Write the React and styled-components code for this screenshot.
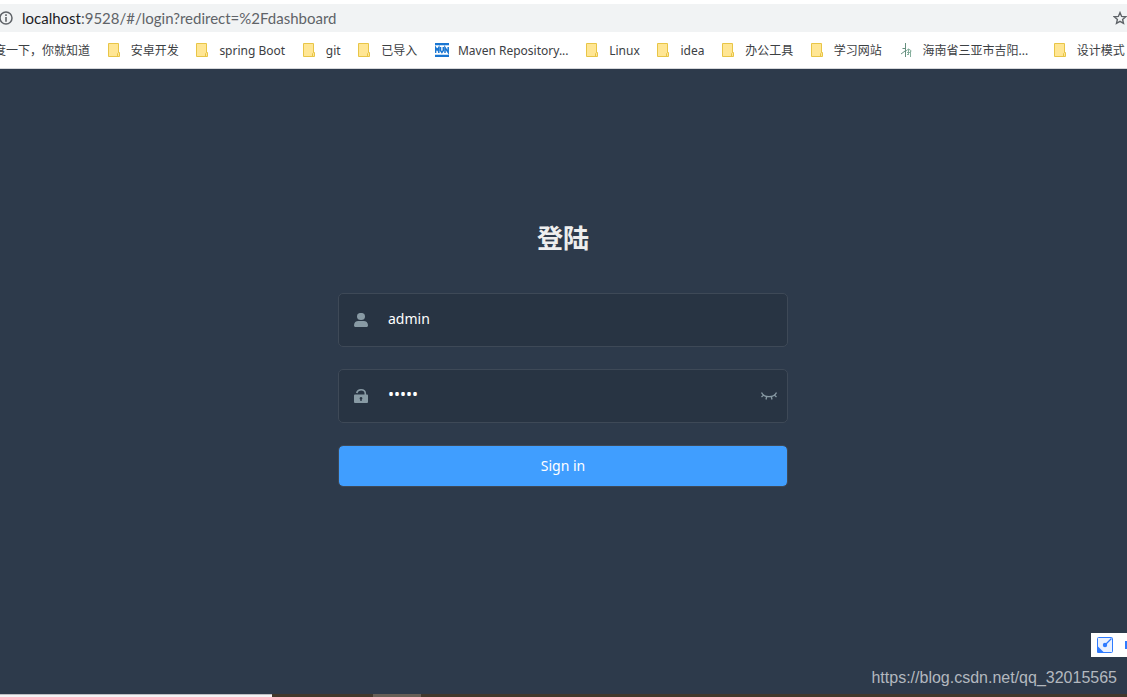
import { useState } from "react";
import styled, { createGlobalStyle } from "styled-components";

const GlobalStyle = createGlobalStyle`
  *, *::before, *::after {
    box-sizing: border-box;
  }

  body {
    margin: 0;
    font-family: "Noto Sans", "Noto Sans CJK SC", sans-serif;
  }
`;

const bookmarks = [
  { label: "百度一下，你就知道" },
  { label: "安卓开发", icon: "folder" },
  { label: "spring Boot", icon: "folder" },
  { label: "git", icon: "folder" },
  { label: "已导入", icon: "folder" },
  { label: "Maven Repository...", icon: "maven" },
  { label: "Linux", icon: "folder" },
  { label: "idea", icon: "folder" },
  { label: "办公工具", icon: "folder" },
  { label: "学习网站", icon: "folder" },
  { label: "海南省三亚市吉阳...", icon: "plant", wide: true },
  { label: "设计模式", icon: "folder" },
];

function FolderIcon() {
  return (
    <svg width="14" height="14" viewBox="0 0 14 14" aria-hidden="true">
      <path d="M.5.5h10v9h1v4H.5z" fill="#ffe694" stroke="#e8c547" />
      <path d="M9.5 13.5v-3l1-1" fill="none" stroke="#e8c547" />
    </svg>
  );
}

function MavenIcon() {
  return (
    <svg width="14" height="14" viewBox="0 0 14 14" aria-hidden="true">
      <path d="M0 0h14v2H0zM0 12h14v2H0z" fill="#1976d2" />
      <path d="M0 2h14v1H0zM0 11h14v1H0z" fill="#c3dcf4" />
      <path
        d="M.6 10V4.500L2.200 7l1.600-2.500V10M5.500 4v3.500L6.900 9.500l1.400-2V4M10 10V4.500l3.200 5V4"
        fill="none"
        stroke="#1976d2"
        strokeWidth="1.500"
      />
    </svg>
  );
}

function PlantIcon() {
  return (
    <svg width="14" height="14" viewBox="0 0 14 14" aria-hidden="true">
      <path d="M5.500 0v14M2.500 5.500h3M5 8l-4 3" fill="none" stroke="#668f7f" />
      <path
        d="M6 8l2.500-2 3 2M8.500 6v6M7 9.500h4M10.500 8v6M7 12l2-2"
        fill="none"
        stroke="#86af9d"
      />
    </svg>
  );
}

const icons = { folder: FolderIcon, maven: MavenIcon, plant: PlantIcon };

function InfoIcon() {
  return (
    <svg width="14" height="14" viewBox="1 0 14 14" aria-hidden="true">
      <circle cx="7" cy="7" r="6" fill="none" stroke="#5f6368" strokeWidth="1.500" />
      <path d="M6.200 3.300h1.600v1.600H6.200zM6.200 6h1.600v4.800H6.200z" fill="#5f6368" />
    </svg>
  );
}

function StarIcon() {
  return (
    <svg width="14" height="14" viewBox="0 0 14 14" aria-hidden="true">
      <path
        d="M7 1.600l1.600 3.800 4.100.3-3.100 2.700.9 4L7 10.300l-3.500 2.100.9-4L1.300 5.700l4.100-.3z"
        fill="none"
        stroke="#5f6368"
        strokeWidth="1.400"
      />
    </svg>
  );
}

function UserIcon() {
  return (
    <svg width="14" height="14" viewBox="0 0 14 14" aria-hidden="true">
      <ellipse cx="7" cy="3.500" rx="4" ry="3.600" fill="currentColor" />
      <path d="M0 12.200C0 9.700 2 8.100 4.200 8.100h5.600c2.200 0 4.200 1.600 4.200 4.100 0 1-.6 1.800-1.600 1.800H1.600C.6 14 0 13.200 0 12.200z" fill="currentColor" />
    </svg>
  );
}

function LockIcon() {
  return (
    <svg width="14" height="14" viewBox="0 0 14 14" aria-hidden="true">
      <path d="M2.700 4C3.200 1.900 4.800.8 7 .8c2.700 0 4.300 1.500 4.300 3.700v1.500" fill="none" stroke="currentColor" strokeWidth="1.600" />
      <path
        d="M1.200 5.500h11.600c.8 0 1.200.5 1.200 1.200v6.100c0 .8-.5 1.200-1.200 1.200H1.200C.5 14 0 13.600 0 12.800V6.700c0-.7.5-1.200 1.200-1.200zM7 8a1.400 1.400 0 0 0-.7 2.600V12h1.400v-1.400A1.400 1.400 0 0 0 7 8z"
        fill="currentColor"
        fillRule="evenodd"
      />
    </svg>
  );
}

function EyeIcon() {
  return (
    <svg width="16" height="8" viewBox="0 0 16 8" aria-hidden="true">
      <path
        d="M.5.5C2 3.200 5 4.700 8 4.700S14 3.200 15.500.5M2.700 3L.5 5M5.700 4.500L5 7.500M10.300 4.500l.7 3M13.300 3l2.200 2"
        fill="none"
        stroke="currentColor"
        strokeWidth="1.300"
      />
    </svg>
  );
}

function CaptureIcon() {
  return (
    <svg width="16" height="16" viewBox="0 0 16 16" aria-hidden="true">
      <rect x=".5" y=".5" width="15" height="15" rx="1" fill="#eaf1ff" stroke="#2f7bff" />
      <path d="M0 8.500L7.500 16H1.500Q0 16 0 14.500z" fill="#2f7bff" />
      <path d="M8 8l6.500-6.500" stroke="#2f7bff" strokeWidth="1.200" />
      <circle cx="8" cy="8" r="2.200" fill="#2f7bff" />
    </svg>
  );
}

function App() {
  const [username, setUsername] = useState("admin");
  const [password, setPassword] = useState("admin");
  const [visible, setVisible] = useState(false);

  return (
    <Window>
      <GlobalStyle />
      <AddressBar>
        <InfoIcon />
        <Address>
          <Host>localhost</Host>:9528/#/login?redirect=%2Fdashboard
        </Address>
        <IconButton type="button" aria-label="Bookmark this page">
          <StarIcon />
        </IconButton>
      </AddressBar>
      <BookmarkBar>
        {bookmarks.map(({ label, icon, wide }) => {
          const Icon = icons[icon];
          return (
            <Bookmark key={label} href="#" $first={!icon} $wide={wide}>
              {Icon && <Icon />}
              <BookmarkLabel>{label}</BookmarkLabel>
            </Bookmark>
          );
        })}
      </BookmarkBar>
      <LoginPage>
        <LoginForm onSubmit={(e) => e.preventDefault()}>
          <Title>登陆</Title>
          <Field>
            <FieldIcon htmlFor="username" aria-label="Username">
              <UserIcon />
            </FieldIcon>
            <Input
              id="username"
              value={username}
              onChange={(e) => setUsername(e.target.value)}
            />
          </Field>
          <Field>
            <FieldIcon htmlFor="password" aria-label="Password">
              <LockIcon />
            </FieldIcon>
            <Input
              id="password"
              type={visible ? "text" : "password"}
              value={password}
              onChange={(e) => setPassword(e.target.value)}
            />
            <IconButton
              type="button"
              aria-label="Show password"
              onClick={() => setVisible(!visible)}
            >
              <EyeIcon />
            </IconButton>
          </Field>
          <SubmitButton type="submit">Sign in</SubmitButton>
        </LoginForm>
        <CaptureTool>
          <CaptureIcon />
          <CaptureMark />
        </CaptureTool>
        <Watermark>https://blog.csdn.net/qq_32015565</Watermark>
      </LoginPage>
      <Taskbar>
        <TaskPreview />
        <TaskItem />
      </Taskbar>
    </Window>
  );
}

export default App;

const Window = styled.div`
  display: flex;
  flex-direction: column;
  min-height: 100vh;
  overflow: hidden;
  background: #fff;
`;

const AddressBar = styled.div`
  display: flex;
  align-items: center;
  gap: 8px;
  height: 28px;
  margin-top: 4px;
  background: #f1f3f4;
  overflow: hidden;

  svg {
    flex: none;
  }
`;

const Address = styled.span`
  flex: 1;
  font-family: Lato, sans-serif;
  font-size: 15px;
  line-height: 20px;
  color: #5f6368;
`;

const Host = styled.span`
  color: #202124;
`;

const IconButton = styled.button`
  display: flex;
  flex: none;
  padding: 0;
  border: 0;
  background: none;
  color: #889aa4;
  cursor: pointer;
`;

const BookmarkBar = styled.nav`
  display: flex;
  align-items: center;
  justify-content: space-between;
  gap: 17px;
  height: 37px;
  padding-right: 2px;
  border-bottom: 1px solid #d5d7da;
  overflow: hidden;
`;

const Bookmark = styled.a`
  display: flex;
  flex: none;
  align-items: center;
  gap: 9px;
  margin-left: ${(props) => (props.$first ? "-18px" : "0")};
  margin-right: ${(props) => (props.$wide ? "8px" : "0")};
  font-size: 12px;
  line-height: 18px;
  color: #3c4043;
  text-decoration: none;
  white-space: nowrap;
`;

const BookmarkLabel = styled.span`
  padding-top: 2px;
`;

const LoginPage = styled.main`
  position: relative;
  flex: 1;
  padding-right: 1px;
  background: #2d3a4b;
`;

const LoginForm = styled.form`
  display: flex;
  flex-direction: column;
  gap: 22px;
  max-width: 450px;
  margin: 0 auto;
  padding-top: 150px;
`;

const Title = styled.h1`
  margin: 0 0 14px;
  font-size: 26px;
  line-height: 38px;
  font-weight: 700;
  color: #eee;
  text-align: center;
`;

const Field = styled.div`
  display: flex;
  align-items: center;
  height: 54px;
  padding: 0 10px 0 15px;
  border: 1px solid #3e4957;
  border-radius: 5px;
  background: #283443;
`;

const FieldIcon = styled.label`
  display: flex;
  flex: none;
  width: 19px;
  color: #889aa4;
`;

const Input = styled.input`
  flex: 1;
  align-self: flex-start;
  min-width: 0;
  height: 48px;
  padding: 0 15px;
  border: 0;
  outline: 0;
  background: transparent;
  color: #fff;
  font-family: inherit;
  font-size: ${(props) => (props.type === "password" ? "16px" : "14px")};
`;

const SubmitButton = styled.button`
  height: 42px;
  padding: 0 0 2px;
  border: 1px solid #3e4957;
  border-radius: 5px;
  background: #409eff;
  background-clip: padding-box;
  color: #fff;
  font-family: inherit;
  font-size: 14px;
  cursor: pointer;
`;

const CaptureTool = styled.div`
  position: absolute;
  right: 0;
  bottom: 37px;
  display: flex;
  align-items: center;
  justify-content: space-between;
  width: 36px;
  height: 24px;
  padding-left: 6px;
  background: #fff;
`;

const CaptureMark = styled.span`
  width: 2px;
  height: 8px;
  background: #2f7bff;
`;

const Watermark = styled.span`
  position: absolute;
  right: 10px;
  bottom: 6px;
  font-family: "Liberation Sans", Arial, sans-serif;
  font-size: 16px;
  line-height: 20px;
  color: #b3b8bf;
`;

const Taskbar = styled.footer`
  display: flex;
  height: 3px;
  background: #41382c;
`;

const TaskPreview = styled.div`
  width: 272px;
  margin-right: 101px;
  border-top: 1px solid #bfbfc3;
  background: #f3f2f4;
`;

const TaskItem = styled.div`
  width: 48px;
  background: #675f56;
`;
